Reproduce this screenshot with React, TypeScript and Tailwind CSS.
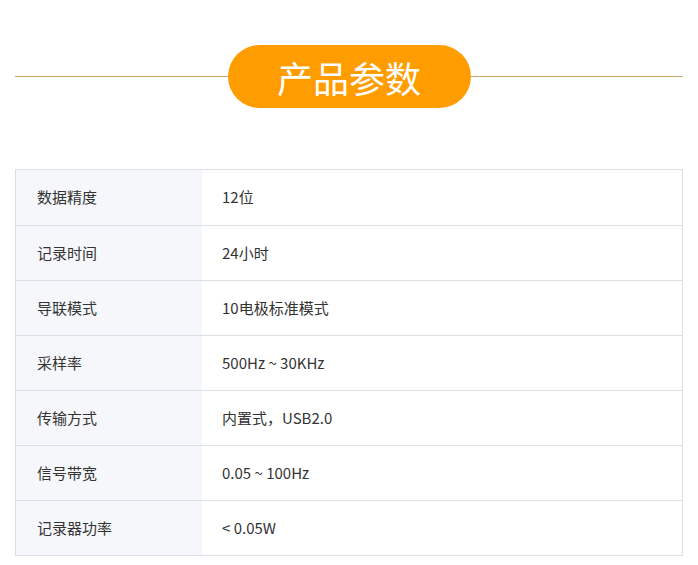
const rows: [string, string][] = [
  ["数据精度", "12位"],
  ["记录时间", "24小时"],
  ["导联模式", "10电极标准模式"],
  ["采样率", "500Hz ~ 30KHz"],
  ["传输方式", "内置式，USB2.0"],
  ["信号带宽", "0.05 ~ 100Hz"],
  ["记录器功率", "< 0.05W"],
];

export default function App() {
  return (
    <div
      className="w-[698px] h-[565px] bg-white text-[#333] px-[15px] pt-[45px]"
      style={{ fontFamily: '"Noto Sans CJK SC", "Noto Sans", sans-serif' }}
    >
      <div className="flex items-center h-[63px]">
        <div className="flex-1 h-px bg-[#c9a66b]" />
        <div className="w-[243px] h-[63px] rounded-full bg-[#ff9c00] flex items-center justify-center text-white text-[36px] leading-none">
          产品参数
        </div>
        <div className="flex-1 h-px bg-[#c9a66b]" />
      </div>
      <div className="mt-[61px] border border-[#dcdfe6]">
        {rows.map(([k, v], i) => (
          <div
            key={k}
            className={`flex h-[55px] text-[15px] ${i > 0 ? "border-t border-[#dcdfe6]" : ""}`}
          >
            <div className="w-[186px] bg-[#f5f7fa] flex items-center pl-[21px]">{k}</div>
            <div className="flex-1 flex items-center pl-[20px]">{v}</div>
          </div>
        ))}
      </div>
    </div>
  );
}
